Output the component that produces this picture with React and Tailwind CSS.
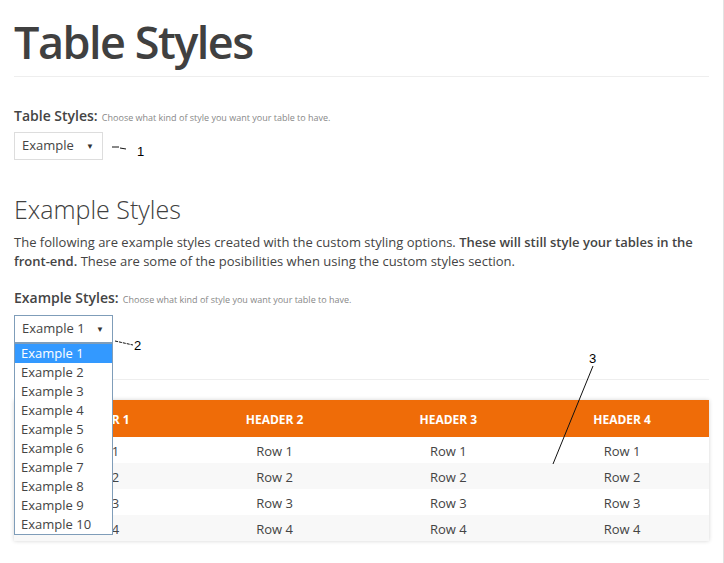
import React from "react";

const rows = ["Row 1", "Row 2", "Row 3", "Row 4"];
const headers = ["HEADER 1", "HEADER 2", "HEADER 3", "HEADER 4"];
const options = [
  "Example 1",
  "Example 2",
  "Example 3",
  "Example 4",
  "Example 5",
  "Example 6",
  "Example 7",
  "Example 8",
  "Example 9",
  "Example 10",
];

const Label = ({ title }) => (
  <div className="leading-[20px] text-[#444]">
    <span className="text-[14px] font-semibold">{title}</span>{" "}
    <span className="text-[9px] text-[#888]">Choose what kind of style you want your table to have.</span>
  </div>
);

export default function App() {
  return (
    <div className="relative min-h-[563px] w-full border-r border-[#e3e3e3] bg-white px-[14px] font-['Open_Sans',sans-serif] text-[#444]">
      <h1 className="pt-[16px] text-[45px] font-semibold leading-[52px] tracking-[-1.5px] text-[#404040]">Table Styles</h1>
      <div className="mt-[8px] border-t border-[#eee]" />

      <div className="mt-[28px]">
        <Label title="Table Styles:" />
      </div>
      <div className="mt-[4px] flex h-[28px] items-center">
        <div className="flex h-[28px] w-[89px] items-center justify-between border border-[#ddd] pl-[7px] pr-[8px] text-[13px]">
          <span>Example</span>
          <span className="text-[8px] text-[#333]">▼</span>
        </div>
        <div className="flex translate-y-[3px] items-center font-['Liberation_Sans',sans-serif] text-[13px] text-black">
          <svg width="16" height="8" viewBox="0 0 16 8" className="ml-[8px] mt-[-2px]">
            <path d="M1 3 L8 3 M9 4 L15 5" stroke="#111" strokeWidth="1" fill="none" />
          </svg>
          <span className="ml-[10px] mt-[6px]">1</span>
        </div>
      </div>

      <h2 className="mt-[34px] text-[25px] font-light leading-[30px] text-[#404040]">Example Styles</h2>
      <p className="mt-[9px] text-[13px] leading-[19px]">
        The following are example styles created with the custom styling options.{" "}
        <b className="font-semibold">These will still style your tables in the front-end.</b> These are some of the
        posibilities when using the custom styles section.
      </p>

      <div className="mt-[16px]">
        <Label title="Example Styles:" />
      </div>
      <div className="relative mt-[5px] h-[28px]">
        <div className="flex h-[28px] w-[99px] items-center justify-between border border-[#7f9db9] pl-[7px] pr-[8px] text-[13px]">
          <span>Example 1</span>
          <span className="text-[8px] text-[#333]">▼</span>
        </div>
        <div className="absolute left-[100px] top-[19px] flex items-center font-['Liberation_Sans',sans-serif] text-[13px] text-black">
          <svg width="20" height="8" viewBox="0 0 20 8" className="mt-[-2px]">
            <path d="M1 1 L19 5" stroke="#111" strokeWidth="1" strokeDasharray="3 1" fill="none" />
          </svg>
          <span className="mt-[2px]">2</span>
        </div>
        <ul className="absolute left-0 top-[28px] z-10 w-[99px] border border-[#7f9db9] bg-white text-[13px] leading-[19px]">
          {options.map((o, i) => (
            <li key={o} className={i === 0 ? "bg-[#3399ff] pl-[6px] text-white" : "pl-[6px] text-[#444]"}>
              {o}
            </li>
          ))}
        </ul>
      </div>

      <div className="mt-[36px] border-t border-[#eee]" />

      <div className="mt-[20px] shadow-[0_0_4px_rgba(0,0,0,0.18)]">
        <div className="grid h-[37px] grid-cols-4 items-center bg-[#ef6c08] pt-[2px] text-[12px] font-bold text-white">
          {headers.map((h) => (
            <div key={h} className="text-center">{h}</div>
          ))}
        </div>
        {rows.map((r, i) => (
          <div key={r} className={`grid h-[26px] grid-cols-4 items-center pt-[3px] text-[13px] ${i % 2 ? "bg-[#f8f8f8]" : "bg-white"}`}>
            {headers.map((h) => (
              <div key={h} className="text-center">{r}</div>
            ))}
          </div>
        ))}
      </div>

      <div className="absolute left-[589px] top-[349px] font-['Liberation_Sans',sans-serif] text-[13px] text-black">3</div>
      <svg className="absolute left-[550px] top-[365px]" width="46" height="102" viewBox="0 0 46 102">
        <path d="M43 1 L3 99" stroke="#111" strokeWidth="1" fill="none" />
      </svg>
    </div>
  );
}
